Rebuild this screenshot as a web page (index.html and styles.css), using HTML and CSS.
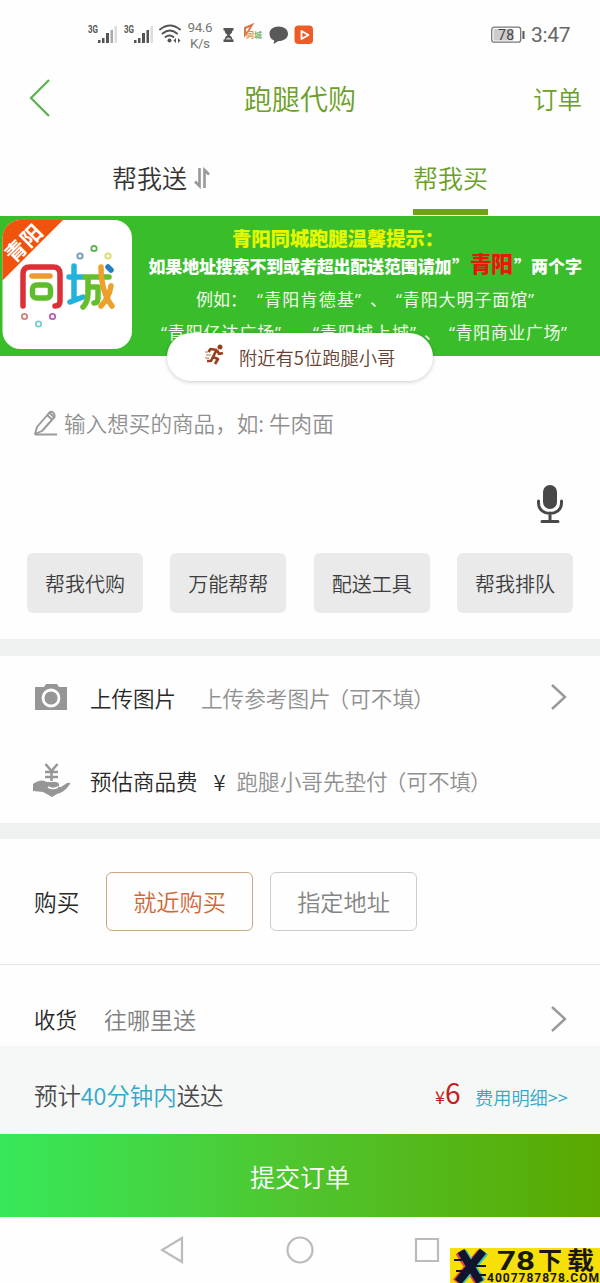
FILE: index.html
```html
<!DOCTYPE html>
<html lang="zh-CN">
<head>
<meta charset="utf-8">
<title>跑腿代购</title>
<link rel="stylesheet" href="styles.css">
</head>
<body>
<div class="phone">
  <div class="status">
    <svg class="status-icons" width="240" height="36" viewBox="80 16 240 36">
      <g fill="#555">
        <text x="88" y="33" class="net" textLength="10" lengthAdjust="spacingAndGlyphs">3G</text>
        <path d="M98 40h2.500v3H98zM102 38h2.500v5H102zM106 33h3v10h-3z"/>
        <path fill="#aaa" d="M110.500 30h2.500v13h-2.500z"/><path fill="#ddd" d="M114.500 26h2.500v17h-2.500z"/>
        <text x="124" y="33" class="net" textLength="10" lengthAdjust="spacingAndGlyphs">3G</text>
        <path d="M134 40h2.500v3H134zM138 38h2.500v5H138zM142 33h3v10h-3zM146.500 30h2.500v13h-2.500z"/><path fill="#ddd" d="M150.500 26h2.500v17h-2.500z"/>
        <circle cx="169.500" cy="40.500" r="2"/><path d="M176 38v5l-2.500-2.500zM178 38v5l2.500-2.500z"/>
      </g>
      <g fill="none" stroke="#555" stroke-width="2" stroke-linecap="round"><path d="M160 29.500q10-8 20 0M162.500 33.500q7.500-6 14.500 0M165.500 37q4-3 8 0"/></g>
      <g class="speed"><text x="187.500" y="32" textLength="25">94.6</text><text x="190" y="47.500" textLength="20">K/s</text></g>
      <path d="M223.500 28h10v2.500h-1q0 2.500-3 4.500 3 2 3 4.500h1V42h-10v-2.500h1q0-2.500 3-4.500-3-2-3-4.500h-1z" fill="#555"/>
      <path d="M225.500 39.500q3-4 6 0z" fill="#ccc"/>
      <path d="M245 28l7-3-3 5-4 5z" fill="none" stroke="#d7764c" stroke-width="2"/>
      <text x="246" y="38" class="mini"><tspan fill="#e09040">同</tspan><tspan fill="#77b56a">城</tspan></text>
      <path d="M278.500 26.500c5.500 0 9.500 3 9.500 7.200s-4 7.300-9.500 7.300l-5 3 .8-3.500c-3-1.200-4.800-3.500-4.800-6.800 0-4.200 3.800-7.200 9-7.200z" fill="#595959"/>
      <rect x="294.500" y="25.500" width="18.500" height="18.500" rx="4" fill="#ef5b24"/>
      <path d="M301.500 31v8l7-4z" fill="none" stroke="#fff" stroke-width="1.800" stroke-linejoin="round"/>
    </svg>
    <div class="status-right">
      <svg width="34" height="18" viewBox="0 0 34 18"><rect x=".7" y="1.200" width="29" height="15" rx="2.500" fill="#fff" stroke="#777" stroke-width="1.300"/><rect x="2.500" y="3" width="20" height="11.500" fill="#ccc"/><path d="M31.500 5h2v8h-2z" fill="#555"/><text x="7" y="14" class="batt" textLength="16">78</text></svg>
      <span class="clock">3:47</span>
    </div>
  </div>
  <header class="header">
    <svg class="back" width="22" height="40" viewBox="0 0 22 40"><path d="M20 2L2 20l18 18" fill="none" stroke="#5cb14d" stroke-width="2.200"/></svg>
    <h1 class="title">跑腿代购</h1>
    <span class="orders">订单</span>
  </header>
  <nav class="tabs">
    <div class="tab">帮我送<svg width="17" height="22" viewBox="0 0 17 22"><path d="M6.500 1v18L2 14.500M11.500 21V3l4.500 4.500" fill="none" stroke="#999" stroke-width="2.600"/></svg></div>
    <div class="tab active">帮我买</div>
  </nav>
  <section class="banner">
    <svg width="600" height="140" viewBox="0 216 600 140">
      <defs><clipPath id="logo"><rect x="2.500" y="220" width="129.500" height="129" rx="18"/></clipPath></defs>
      <rect x="2.500" y="220" width="129.500" height="129" rx="18" fill="#fff"/>
      <path d="M0 216h67L0 283z" fill="#f0530c" clip-path="url(#logo)"/>
      <text x="0" y="0" class="corner" textLength="43" transform="translate(14 264) rotate(-45)">青阳</text>
      <g fill="none" stroke-width="5.500" stroke-linecap="round" stroke-linejoin="round">
        <path d="M23 306v-32q0-7 7-7h23q7 0 7 7v27q0 5-5 5" stroke="#dc3038"/>
        <path d="M32 276h18" stroke="#ee9a31"/><rect x="32.500" y="285" width="18" height="13" rx="4" stroke="#5fbd2d"/>
        <path d="M74 266v34M69 277h14M70 302l13-5" stroke="#22b3dc"/>
        <path d="M85 277h24M88 277v16q0 9-5 14M90 287h8v11q0 5-4 5" stroke="#65be2e"/>
        <path d="M101 267q0 25 11 39M111 286q-2 12-10 20" stroke="#eda12d"/><path d="M108 267l3 3" stroke="#247ec3"/>
      </g>
      <g fill="none" stroke-width="1.800"><circle cx="80" cy="256" r="2.700" stroke="#7299b6"/><circle cx="94" cy="248.500" r="2.700" stroke="#54b44c"/><circle cx="108" cy="256" r="2.700" stroke="#d8dc68"/><circle cx="24.500" cy="316.500" r="2.700" stroke="#cf827a"/><circle cx="38.500" cy="324" r="2.700" stroke="#75d0d1"/><circle cx="52.500" cy="316.500" r="2.700" stroke="#b960b4"/></g>
      <text x="232" y="245.500" class="tip-title" textLength="212">青阳同城跑腿温馨提示：</text>
      <g class="tip-bold"><text x="148.500" y="272.500" textLength="303">如果地址搜索不到或者超出配送范围请加</text><text x="452" y="272.500">”</text><text x="514" y="272.500">”</text><text x="531" y="272.500" textLength="51">两个字</text></g>
      <text x="470" y="272" class="tip-red" textLength="43">青阳</text>
      <g class="tip-line">
        <text x="196" y="306" textLength="51">例如：</text><text x="257" y="306" textLength="104">“青阳肯德基”</text><text x="370" y="306">、</text><text x="396" y="306" textLength="138">“青阳大明子面馆”</text>
        <text x="161" y="339" textLength="120">“青阳亿达广场”</text><text x="313" y="339" textLength="103">“青阳城上城”</text><text x="424" y="339">、</text><text x="449" y="339" textLength="118">“青阳商业广场”</text>
      </g>
    </svg>
    <div class="nearby">
      <svg width="20" height="22" viewBox="0 0 20 22"><circle cx="15" cy="3" r="2.500" fill="#983f1c"/><path d="M12 6L5.500 5 3.500 8M12 6l2 4 4-1M11 7l-3 6 5 2-3 5M8 13l-2 4H2" fill="none" stroke="#983f1c" stroke-width="2.700" stroke-linejoin="round"/><path d="M0 8h3M1 11h5M0 14h4" stroke="#b46a49" stroke-width="1"/></svg>
      <span>附近有5位跑腿小哥</span>
    </div>
  </section>
  <section class="compose">
    <div class="input-row">
      <svg width="26" height="28" viewBox="0 0 26 28"><g fill="none" stroke="#999" stroke-width="1.900" stroke-linejoin="round"><path d="M2 25l2-7L16 4q2-2 4-.5t1.500 4.500L9 22z"/><path d="M14 6l5 4.500M16.500 4l5 4.500M2 25.500h22"/></g></svg>
      <span class="hint">输入想买的商品，如: 牛肉面</span>
    </div>
    <svg class="mic" width="28" height="40" viewBox="0 0 28 40"><rect x="7" y="1" width="14" height="24" rx="7" fill="#484848"/><path d="M2.500 17v2c0 14 23 14 23 0v-2M14 29v8M6 37.500h16" fill="none" stroke="#484848" stroke-width="3" stroke-linecap="round"/></svg>
    <div class="chips"><span>帮我代购</span><span>万能帮帮</span><span>配送工具</span><span>帮我排队</span></div>
  </section>
  <section class="details">
    <div class="row">
      <svg class="row-icon" width="38" height="36" viewBox="0 0 38 36"><path d="M2 8h9l2-3h11l2 3h8v23H2z" fill="#969696"/><circle cx="18" cy="19" r="8" fill="#969696" stroke="#fff" stroke-width="2.800"/></svg>
      <span class="label">上传图片</span><span class="hint upload-hint">上传参考图片<i class="open">（</i>可不填<i class="close">）</i></span>
      <svg class="chev" width="18" height="28" viewBox="0 0 18 28"><path d="M2 2l13 12L2 26" fill="none" stroke="#999" stroke-width="2.400"/></svg>
    </div>
    <div class="row">
      <svg class="row-icon" width="38" height="36" viewBox="0 0 38 36"><g fill="none" stroke="#969696" stroke-width="2.500"><path d="M12.500 2l6 7 6-7M18.500 8v11M12 10h13M12 15h13"/></g><path d="M0 22q8-6 14-2h9q5 1 2 5h3l6-4q4-1 3 1-5 8-13 10l-5 3-9-5-10-1z" fill="#969696"/><path d="M15 25q5 3 10 0" fill="none" stroke="#fff" stroke-width="1.500"/></svg>
      <span class="label">预估商品费</span><span class="yuan">¥</span><span class="hint">跑腿小哥先垫付<i class="open">（</i>可不填<i class="close">）</i></span>
    </div>
  </section>
  <section class="buy">
    <span class="buy-label">购买</span><span class="choice selected">就近购买</span><span class="choice">指定地址</span>
  </section>
  <section class="deliver">
    <span class="label">收货</span><span class="where">往哪里送</span>
    <svg class="chev" width="18" height="28" viewBox="0 0 18 28"><path d="M2 2l13 12L2 26" fill="none" stroke="#999" stroke-width="2.400"/></svg>
  </section>
  <section class="summary">
    <span class="eta">预计<b>40分钟内</b>送达</span><span class="price"><small>¥</small>6</span><span class="fee">费用明细&gt;&gt;</span>
  </section>
  <button class="submit">提交订单</button>
  <footer class="nav">
    <svg width="24" height="28" viewBox="0 0 24 28"><path d="M22 2v24L2 14z"/></svg>
    <svg width="30" height="28" viewBox="0 0 30 28"><circle cx="15" cy="14" r="12.500"/></svg>
    <svg width="26" height="28" viewBox="0 0 26 28"><path d="M2 3h22v22H2z"/></svg>
  </footer>
  <div class="mark">
    <svg width="150" height="35" viewBox="450 1248 150 35">
      <g fill="none" stroke-width="8"><path d="M459 1252l19 30M481 1252l-25 30" stroke="#f04545"/><path d="M463 1252l19 30M485 1252l-25 30" stroke="#38c7c0"/><path d="M461 1251l19 31M483 1251l-25 31" stroke="#10142c"/></g>
      <path d="M454 1260h8M456 1271h9M475 1266h11M478 1275h8" stroke="#10142c" stroke-width="2"/>
      <text x="497" y="1270" class="mark-num" textLength="38" lengthAdjust="spacingAndGlyphs">78</text><text x="538" y="1269" class="mark-cn">下</text><text x="567" y="1269" class="mark-cn" textLength="27" lengthAdjust="spacingAndGlyphs">载</text>
      <text x="487" y="1282" class="mark-url" textLength="112" lengthAdjust="spacing">4007787878.COM</text>
    </svg>
  </div>
</div>
</body>
</html>
```
FILE: styles.css
```css
* { box-sizing: border-box; }
body { margin: 0; background: #fdfefd; font-family: "Noto Sans CJK SC", sans-serif; font-weight: 350; color: #333; }
.phone { position: relative; width: 600px; height: 1283px; overflow: hidden; display: flex; flex-direction: column; white-space: nowrap; }
.phone > * { flex-shrink: 0; }
svg { display: block; flex-shrink: 0; }
i { font-style: normal; }
.status { height: 68px; padding: 16px 30px 0 80px; display: flex; justify-content: space-between; }
.status-right { display: flex; height: 37px; align-items: center; gap: 6px; }
.clock { font: 21px/1 Roboto, sans-serif; color: #666; width: 39px; letter-spacing: -.3px; margin-top: 2px; }
.batt { font: 14px Roboto, sans-serif; fill: #444; }
.net { font: bold 10px Roboto, sans-serif; }
.speed { font: 13.5px Roboto, sans-serif; fill: #777; }
.mini { font-size: 8px; font-weight: 700; }
.header { height: 62px; padding: 0 18px 2px 29px; display: grid; grid-template-columns: 60px 1fr 49px; align-items: center; color: #6b9f27; }
.back { margin-top: -1px; }
.title { margin: 0; padding-right: 22px; text-align: center; font-size: 28px; font-weight: 350; line-height: 60px; }
.orders { font-size: 24.5px; }
.tabs { height: 86px; display: flex; padding-top: 20px; }
.tab { height: 65px; width: 75px; font-size: 25px; line-height: 55px; display: flex; gap: 6px; align-items: flex-start; margin-left: 112px; }
.tab svg { margin-top: 17px; }
.tab.active { margin-left: 226px; color: #6b9f27; border-bottom: 6px solid #6da315; }
.banner { position: relative; height: 140px; background: #3abd2b; }
.corner { font-size: 21px; font-weight: 700; fill: #fff; }
.tip-title { font-size: 19.5px; font-weight: 900; fill: #e5f800; }
.tip-bold { font-size: 17px; font-weight: 900; fill: #fff; }
.tip-red { font-size: 22px; font-weight: 900; fill: #e5190b; }
.tip-line { font-family: "Open Sans", "Noto Sans CJK SC", sans-serif; font-size: 17px; font-weight: 400; fill: #effbe9; }
.nearby { position: absolute; left: 167px; top: 117px; width: 266px; height: 48px; border-radius: 24px; background: #fff; box-shadow: 0 1px 4px #0003; display: flex; align-items: center; padding-left: 38px; gap: 14px; font-size: 18.3px; color: #67412f; }
.nearby svg { margin-top: -4px; }
.compose { height: 283px; padding: 49px 27px 0; display: flex; flex-direction: column; }
.input-row { height: 36px; padding-left: 6px; display: flex; align-items: center; gap: 5px; }
.input-row .hint { margin-top: -2px; }
.hint { color: #909090; font-size: 21.6px; }
.open { margin-left: -3px; }
.close { margin-left: -1px; }
.mic { align-self: flex-end; margin: 43px 9px 0 0; }
.chips { margin-top: 29px; display: grid; grid-template-columns: repeat(4, 116px); justify-content: space-between; }
.chips span { height: 60px; line-height: 62px; border-radius: 6px; background: #e9eae9; text-align: center; font-size: 20px; color: #3c3c3c; }
.details { border-top: 17px solid #eff1f0; border-bottom: 16px solid #eff1f0; height: 200px; }
.row { height: 84px; padding: 0 32px 2px 33px; display: flex; align-items: center; }
.row + .row { height: 83px; }
.label { font-size: 21.5px; color: #282828; }
.row .label { margin-left: 19px; }
.upload-hint { margin-left: 25px; }
.row-icon { margin-top: -1px; }
.chev { margin-left: auto; }
.yuan { width: 23px; margin-left: 16px; font-size: 22px; color: #282828; }
.buy { height: 126px; padding: 0 34px; border-bottom: 1px solid #e2e3e3; display: flex; align-items: center; }
.buy-label { font-size: 22.7px; width: 72px; color: #282828; }
.choice { width: 147px; height: 59px; border: 1px solid #ccc; border-radius: 6px; line-height: 56px; font-size: 23.2px; color: #858585; text-align: center; margin-right: 17px; }
.choice.selected { border-color: #c9a780; color: #d0683a; }
.deliver { height: 81px; padding: 26px 32px 0 34px; display: flex; align-items: center; }
.where { font-size: 23px; color: #808080; margin-left: 27px; }
.summary { height: 88px; background: #f6f8f8; padding: 10px 0 0 34px; display: flex; align-items: center; color: #4a4a4a; }
.eta { font-size: 23.4px; width: 401px; }
.eta b { color: #32a8ca; font-weight: 350; }
.price { width: 40px; color: #c51f22; font-size: 28px; font-weight: 400; margin-top: -6px; }
.price small { font-size: 18px; }
.fee { color: #32a8ca; font-size: 18.2px; margin-top: 3px; }
.submit { border: 0; padding: 0; height: 83px; background: linear-gradient(90deg, #37e85a, #4fc52e 50%, #5aa800); color: #fff; font: 350 25px "Noto Sans CJK SC", sans-serif; }
.nav { height: 66px; display: flex; align-items: center; padding-left: 160px; }
.nav svg { fill: none; stroke: #bbb; stroke-width: 2.200; }
.nav svg + svg { margin-left: 101px; }
.nav svg:last-child { margin-left: 99px; }
.mark { position: absolute; right: 0; bottom: 0; width: 150px; height: 35px; background: #f7df0a; }
.mark svg { overflow: visible; }
.mark-num { font: bold 25px Roboto, sans-serif; fill: #171717; }
.mark-cn { font-size: 24px; font-weight: 700; fill: #171717; }
.mark-url { font: bold 12px Roboto, sans-serif; fill: #171717; }
```
